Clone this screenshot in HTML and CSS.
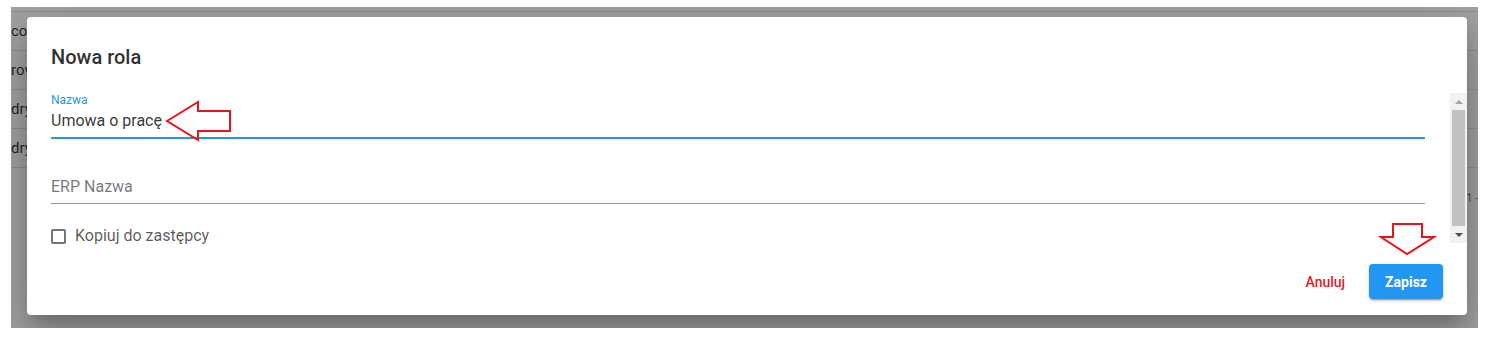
FILE: index.html
```html
<!DOCTYPE html>
<html lang="pl">
<head>
<meta charset="utf-8">
<title>Nowa rola</title>
<link rel="stylesheet" href="styles.css">
</head>
<body>
<div class="app">
  <div class="app-header"></div>
  <div class="table">
    <div class="row"><span class="cell">co</span></div>
    <div class="row"><span class="cell">rov</span></div>
    <div class="row"><span class="cell">dry</span></div>
    <div class="row"><span class="cell">dry</span></div>
  </div>
  <div class="footer"><span>1 -</span></div>

  <div class="overlay"></div>

  <div class="dialog">
    <div class="dialog-title">Nowa rola</div>
    <div class="dialog-body">
      <div class="body-content">
        <div class="field focused">
          <label class="field-label">Nazwa</label>
          <div class="field-input">Umowa o pracę</div>
        </div>
        <div class="field empty">
          <div class="field-label"></div>
          <div class="field-input placeholder">ERP Nazwa</div>
        </div>
        <div class="check-row">
          <span class="checkbox"></span>
          <span class="check-label">Kopiuj do zastępcy</span>
        </div>
      </div>
      <div class="scrollbar">
        <div class="sb-btn"><span class="tri-up"></span></div>
        <div class="sb-track"><div class="sb-thumb"></div></div>
        <div class="sb-btn"><span class="tri-down"></span></div>
      </div>
    </div>
    <div class="dialog-actions">
      <button class="btn btn-text">Anuluj</button>
      <button class="btn btn-primary">Zapisz</button>
    </div>
  </div>
</div>

<svg class="annotations" width="1492" height="342" viewBox="0 0 1492 342" xmlns="http://www.w3.org/2000/svg">
  <polygon points="167,121 198,102 198,111 230,111 230,131 198,131 198,140" fill="none" stroke="#e8141b" stroke-width="2" stroke-linejoin="miter"/>
  <polygon points="1393,224 1422,224 1422,237 1434,237 1407,254 1381,237 1393,237" fill="none" stroke="#e8141b" stroke-width="2" stroke-linejoin="miter"/>
</svg>
</body>
</html>
```

FILE: styles.css
```css
* { box-sizing: border-box; }

html, body {
  margin: 0;
  padding: 0;
  background: #ffffff;
  width: 1492px;
  height: 342px;
  overflow: hidden;
  font-family: Roboto, "Noto Sans", "Liberation Sans", sans-serif;
}

body { position: relative; }

.app {
  position: relative;
  margin: 7px 0 0 11px;
  width: 1467px;
  height: 321px;
  overflow: hidden;
  background: #ffffff;
}

.app-header {
  height: 5px;
  border-bottom: 1px solid #e0e0e0;
}

.table { display: flex; flex-direction: column; }

.row {
  height: 39px;
  border-bottom: 1px solid #e0e0e0;
  display: flex;
  align-items: center;
  font-size: 15px;
  color: rgba(0, 0, 0, 0.87);
}

.cell { padding-left: 0; }

.footer {
  height: 60px;
  display: flex;
  align-items: center;
  padding-left: 1455px;
  font-size: 12px;
  color: rgba(0, 0, 0, 0.6);
  white-space: nowrap;
}

.overlay {
  position: absolute;
  inset: 0;
  background: rgba(33, 33, 33, 0.42);
}

.dialog {
  position: absolute;
  left: 16px;
  top: 10px;
  width: 1440px;
  height: 298px;
  background: #ffffff;
  border-radius: 4px;
  box-shadow: 0 11px 15px -7px rgba(0,0,0,0.2), 0 24px 38px 3px rgba(0,0,0,0.14), 0 9px 46px 8px rgba(0,0,0,0.12);
  display: flex;
  flex-direction: column;
}

.dialog-title {
  padding: 24px 24px 0;
  height: 56px;
  line-height: 32px;
  font-size: 20px;
  font-weight: 500;
  color: rgba(0, 0, 0, 0.84);
  margin-bottom: 20px;
}

.dialog-body {
  height: 150px;
  display: flex;
}

.body-content {
  flex: 1;
  padding: 0 25px 0 24px;
}

.field { display: flex; flex-direction: column; }

.field + .field { margin-top: 20px; }

.field-label {
  height: 14px;
  line-height: 14px;
  font-size: 12px;
  color: #2196f3;
  margin-bottom: 4px;
}

.field-input {
  font-size: 16px;
  line-height: 20px;
  color: rgba(0, 0, 0, 0.8);
  padding-bottom: 6px;
  border-bottom: 1px solid rgba(0, 0, 0, 0.42);
}

.field.focused .field-input {
  border-bottom: 2px solid #2196f3;
}

.field-input.placeholder { color: rgba(0, 0, 0, 0.55); }

.check-row {
  margin-top: 22px;
  display: flex;
  align-items: center;
  height: 20px;
  gap: 9px;
}

.checkbox {
  width: 15px;
  height: 15px;
  border: 2px solid #757575;
  border-radius: 2px;
  flex: none;
}

.check-label {
  font-size: 16px;
  line-height: 20px;
  color: rgba(0, 0, 0, 0.66);
}

.scrollbar {
  width: 17px;
  flex: none;
  background: #f1f1f1;
  display: flex;
  flex-direction: column;
}

.sb-btn {
  height: 17px;
  display: flex;
  align-items: center;
  justify-content: center;
  flex: none;
}

.sb-track {
  flex: 1;
  padding: 0 2px;
  display: flex;
}

.sb-thumb {
  flex: 1;
  background: #c1c1c1;
}

.tri-up {
  width: 0; height: 0;
  border-left: 4px solid transparent;
  border-right: 4px solid transparent;
  border-bottom: 4px solid #a3a3a3;
}

.tri-down {
  width: 0; height: 0;
  border-left: 4px solid transparent;
  border-right: 4px solid transparent;
  border-top: 4px solid #505050;
}

.dialog-actions {
  display: flex;
  justify-content: flex-end;
  align-items: center;
  gap: 8px;
  padding: 21px 24px 16px;
}

.btn {
  font-family: Roboto, "Noto Sans", "Liberation Sans", sans-serif;
  font-size: 14px;
  height: 35px;
  padding: 0 16px;
  border: none;
  border-radius: 4px;
  background: transparent;
  cursor: pointer;
  text-transform: none;
  letter-spacing: 0;
}

.btn-text {
  color: #e31b23;
  font-weight: 500;
}

.btn-primary {
  background: #2196f3;
  color: #ffffff;
  font-weight: 700;
  box-shadow: 0 3px 1px -2px rgba(0,0,0,0.2), 0 2px 2px 0 rgba(0,0,0,0.14), 0 1px 5px 0 rgba(0,0,0,0.12);
}

.annotations {
  position: absolute;
  left: 0;
  top: 0;
  pointer-events: none;
}
```
